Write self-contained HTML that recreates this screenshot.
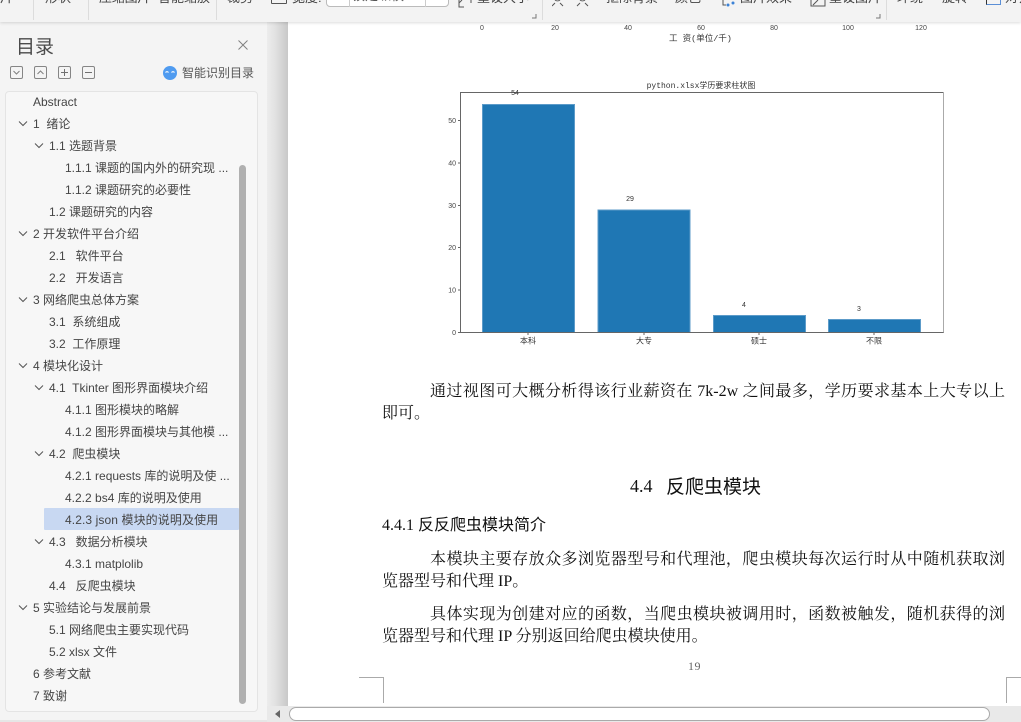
<!DOCTYPE html>
<html lang="zh">
<head>
<meta charset="utf-8">
<title>目录</title>
<style>
*{box-sizing:border-box}
html,body{margin:0;padding:0}
body{width:1021px;height:722px;position:relative;overflow:hidden;background:#fff;font-family:"Liberation Sans","Noto Sans CJK SC",sans-serif}
.a{position:absolute;white-space:nowrap}
.tb{font-size:13px;line-height:16px;top:-10px;color:#444}
.sep{position:absolute;top:0;width:1px;height:20px;background:#dcdcdc}
.toc{position:absolute;font-size:12px;line-height:22px;height:22px;color:#454545;white-space:pre;margin-top:1px}
.ic{position:absolute;top:66px;width:13px;height:13px;border:1px solid #858585;border-radius:2px}
.line{position:absolute;left:382px;width:623px;height:22px;font-family:"Liberation Serif","Noto Serif CJK SC",serif;font-size:16px;line-height:22px;color:#111;white-space:nowrap}
.j{text-align-last:justify;white-space:normal}
</style>
</head>
<body>

<!-- sidebar -->
<div class="a" style="left:0;top:22px;width:267px;height:700px;background:#f4f4f4"></div>
<!-- gutter -->
<div class="a" style="left:267px;top:22px;width:21px;height:684px;background:linear-gradient(90deg,#ececec 0,#e3e3e3 35%,#c8c8c8 100%)"></div>

<!-- toolbar -->
<div class="a" style="left:0;top:0;width:1021px;height:22px;background:#f3f3f3;box-shadow:0 1px 3px rgba(0,0,0,.14)"></div>
<div class="a tb" style="left:0">片</div>
<div class="sep" style="left:33px"></div>
<div class="a tb" style="left:45px">形状</div>
<div class="sep" style="left:88px"></div>
<div class="a tb" style="left:99px;letter-spacing:-.2px">压缩图片</div>
<div class="a tb" style="left:158px">智能缩放</div>
<div class="sep" style="left:216px"></div>
<div class="a tb" style="left:227px">裁剪</div>
<div class="a" style="left:271px;top:-6px;width:16px;height:10px;border:1px solid #555;border-radius:1px"></div>
<div class="a tb" style="left:292px">宽度:</div>
<div class="a" style="left:326px;top:-8px;width:123px;height:15px;background:#fff;border:1px solid #bbb;border-radius:4px"></div>
<div class="a" style="left:349px;top:0;width:1px;height:7px;background:#ccc"></div>
<div class="a" style="left:425px;top:0;width:1px;height:7px;background:#ccc"></div>
<div class="a tb" style="left:352px;top:-12px;color:#555">锁定纵横</div>
<div class="a tb" style="left:436px;top:-12px;color:#555">+</div>
<svg class="a" style="left:458px;top:0" width="14" height="9"><path d="M1 0V7H6M13 0V3M4 0L1 3" fill="none" stroke="#555"/></svg>
<div class="a tb" style="left:477px">重设大小</div>
<svg class="a" style="left:531px;top:13px" width="6" height="6"><path d="M5 1V5H1" fill="none" stroke="#777"/></svg>
<div class="sep" style="left:542px"></div>
<svg class="a" style="left:552px;top:0" width="40" height="7"><path d="M3 0A4 4 0 0 0 8 0M0 6L3 3M11 6L8 3M28 0A4 4 0 0 0 33 0M25 6L28 3M36 6L33 3" fill="none" stroke="#555"/></svg>
<div class="a tb" style="left:606px">抠除背景</div>
<div class="a tb" style="left:675px">颜色</div>
<svg class="a" style="left:720px;top:0" width="16" height="9"><circle cx="8" cy="5" r="1.5" fill="#3b82d6"/><circle cx="13" cy="3" r="1.5" fill="#3b82d6"/><path d="M3 0V5H6" fill="none" stroke="#555"/></svg>
<div class="a tb" style="left:740px">图片效果</div>
<svg class="a" style="left:810px;top:0" width="16" height="7"><path d="M1 0V6H15V0M3 5L8 0" fill="none" stroke="#555"/></svg>
<div class="a tb" style="left:829px">重设图片</div>
<svg class="a" style="left:875px;top:13px" width="6" height="6"><path d="M5 1V5H1" fill="none" stroke="#777"/></svg>
<div class="sep" style="left:886px"></div>
<div class="a tb" style="left:897px">环绕</div>
<div class="a tb" style="left:942px">旋转</div>
<div class="a" style="left:986px;top:-6px;width:15px;height:11px;border:1px solid #5b8fd6;border-left:1px solid #333"></div>
<div class="a tb" style="left:1005px">对齐</div>

<!-- sidebar header -->
<div class="a" style="left:16px;top:35px;font-size:19px;line-height:26px;color:#4a4a4a">目录</div>
<svg class="a" style="left:237px;top:39px" width="12" height="12"><path d="M1.5 1.5L10.5 10.5M10.5 1.5L1.5 10.5" stroke="#808080" stroke-width="1"/></svg>
<div class="ic" style="left:10px"><svg style="position:absolute;left:0;top:0" width="11" height="11"><path d="M2.5 4L5.5 7L8.5 4" fill="none" stroke="#808080"/></svg></div>
<div class="ic" style="left:34px"><svg style="position:absolute;left:0;top:0" width="11" height="11"><path d="M2.5 7L5.5 4L8.5 7" fill="none" stroke="#808080"/></svg></div>
<div class="ic" style="left:58px"><svg style="position:absolute;left:0;top:0" width="11" height="11"><path d="M2 5.5H9M5.5 2V9" fill="none" stroke="#707070"/></svg></div>
<div class="ic" style="left:82px"><svg style="position:absolute;left:0;top:0" width="11" height="11"><path d="M2 5.5H9" fill="none" stroke="#707070"/></svg></div>
<svg class="a" style="left:163px;top:66px" width="14" height="14"><circle cx="7" cy="7" r="7" fill="#4f9bf0"/><path d="M2.5 6.5Q4 4.8 5.5 6.5M8.5 6.5Q10 4.8 11.5 6.5" fill="none" stroke="#fff" stroke-width="1.1"/></svg>
<div class="a" style="left:182px;top:64px;font-size:12px;line-height:18px;color:#555">智能识别目录</div>

<!-- TOC panel -->
<div class="a" style="left:5px;top:91px;width:253px;height:621px;background:#f7f7f7;border:1px solid #e4e4e4;border-radius:4px"></div>
<div class="a" style="left:44px;top:508px;width:195px;height:22px;background:#c8d8f2;border-radius:1px"></div>
<div class="a" style="left:239px;top:165px;width:7px;height:539px;background:#b0b0b0;border-radius:3.5px"></div>

<div class="toc" style="left:33px;top:90px">Abstract</div>
<div class="toc" style="left:33px;top:112px">1  绪论</div>
<div class="toc" style="left:49px;top:134px">1.1 选题背景</div>
<div class="toc" style="left:65px;top:156px">1.1.1 课题的国内外的研究现 ...</div>
<div class="toc" style="left:65px;top:178px">1.1.2 课题研究的必要性</div>
<div class="toc" style="left:49px;top:200px">1.2 课题研究的内容</div>
<div class="toc" style="left:33px;top:222px">2 开发软件平台介绍</div>
<div class="toc" style="left:49px;top:244px">2.1   软件平台</div>
<div class="toc" style="left:49px;top:266px">2.2   开发语言</div>
<div class="toc" style="left:33px;top:288px">3 网络爬虫总体方案</div>
<div class="toc" style="left:49px;top:310px">3.1  系统组成</div>
<div class="toc" style="left:49px;top:332px">3.2  工作原理</div>
<div class="toc" style="left:33px;top:354px">4 模块化设计</div>
<div class="toc" style="left:49px;top:376px">4.1  Tkinter 图形界面模块介绍</div>
<div class="toc" style="left:65px;top:398px">4.1.1 图形模块的略解</div>
<div class="toc" style="left:65px;top:420px">4.1.2 图形界面模块与其他模 ...</div>
<div class="toc" style="left:49px;top:442px">4.2  爬虫模块</div>
<div class="toc" style="left:65px;top:464px">4.2.1 requests 库的说明及使 ...</div>
<div class="toc" style="left:65px;top:486px">4.2.2 bs4 库的说明及使用</div>
<div class="toc" style="left:65px;top:508px;letter-spacing:.1px">4.2.3 json 模块的说明及使用</div>
<div class="toc" style="left:49px;top:530px">4.3   数据分析模块</div>
<div class="toc" style="left:65px;top:552px">4.3.1 matplolib</div>
<div class="toc" style="left:49px;top:574px">4.4   反爬虫模块</div>
<div class="toc" style="left:33px;top:596px">5 实验结论与发展前景</div>
<div class="toc" style="left:49px;top:618px">5.1 网络爬虫主要实现代码</div>
<div class="toc" style="left:49px;top:640px">5.2 xlsx 文件</div>
<div class="toc" style="left:33px;top:662px">6 参考文献</div>
<div class="toc" style="left:33px;top:684px">7 致谢</div>

<svg class="a" style="left:0;top:0" width="60" height="640"><g fill="none" stroke="#555" stroke-width="1">
<path d="M19 121.5L23 125.500L27 121.5"/>
<path d="M35 143.5L39 147.500L43 143.5"/>
<path d="M19 231.5L23 235.500L27 231.5"/>
<path d="M19 297.5L23 301.500L27 297.5"/>
<path d="M19 363.5L23 367.500L27 363.5"/>
<path d="M35 385.5L39 389.500L43 385.5"/>
<path d="M35 451.5L39 455.500L43 451.5"/>
<path d="M35 539.5L39 543.500L43 539.5"/>
<path d="M19 605.5L23 609.500L27 605.5"/>
</g></svg>

<!-- page: previous chart ticks -->
<svg class="a" style="left:288px;top:22px" width="733" height="340" font-family="'Liberation Sans','Noto Sans CJK SC',sans-serif" fill="#444">
<g font-size="7" text-anchor="middle">
<text x="194" y="8">0</text><text x="267" y="8">20</text><text x="340" y="8">40</text><text x="413" y="8">60</text><text x="486" y="8">80</text><text x="560" y="8">100</text><text x="633" y="8">120</text>
</g>
<text x="381" y="19" font-size="8.500" fill="#333" font-family="'Liberation Mono','Noto Sans CJK SC',monospace" xml:space="preserve">工 资(单位/千)</text>
<text x="413" y="66" font-size="8" text-anchor="middle" fill="#333" font-family="'Liberation Mono','Noto Sans CJK SC',monospace">python.xlsx学历要求柱状图</text>
<!-- axes -->
<rect x="172.5" y="70.5" width="483" height="240" fill="none" stroke="#666"/>
<path d="M655.5 70V311" stroke="#aaa"/>
<!-- bars -->
<g fill="#1f77b4" stroke="#5c9bc9" stroke-width="1">
<rect x="194.5" y="82.5" width="92" height="228"/>
<rect x="310" y="188" width="92" height="122.5"/>
<rect x="425.5" y="293.5" width="92" height="17"/>
<rect x="540.5" y="297.5" width="92" height="13"/>
</g>
<path d="M172.5 310.5H655.5" stroke="#666"/>
<!-- y ticks -->
<g stroke="#666"><path d="M170 98.5H172M170 141H172M170 183.5H172M170 225.5H172M170 268H172M170 310.5H172M240 311V313M356 311V313M471 311V313M586 311V313"/></g>
<g font-size="7" text-anchor="end">
<text x="168" y="101">50</text><text x="168" y="143.500">40</text><text x="168" y="186">30</text><text x="168" y="228">20</text><text x="168" y="270.500">10</text><text x="168" y="313">0</text>
</g>
<g font-size="7" text-anchor="middle" fill="#333">
<text x="227" y="73">54</text><text x="342" y="179">29</text><text x="456" y="285">4</text><text x="571" y="289">3</text>
</g>
<g font-size="8" text-anchor="middle" fill="#333">
<text x="240" y="321.500">本科</text><text x="356" y="321.500">大专</text><text x="471" y="321.500">硕士</text><text x="586" y="321.500">不限</text>
</g>
</svg>

<!-- body text -->
<div class="line j" style="left:430px;width:575px;top:381px">通过视图可大概分析得该行业薪资在 7k-2w 之间最多，学历要求基本上大专以上</div>
<div class="line" style="top:403px">即可。</div>
<div class="a" style="left:630px;top:474px;font-family:'Liberation Serif',serif;font-size:18px;line-height:24px;color:#111">4.4</div>
<div class="a" style="left:666px;top:474px;font-family:'Noto Sans CJK SC',sans-serif;font-size:19px;line-height:24px;color:#111">反爬虫模块</div>
<div class="line" style="top:515px;font-size:16px;font-family:'Liberation Serif','Noto Sans CJK SC',serif">4.4.1 反反爬虫模块简介</div>
<div class="line j" style="left:430px;width:575px;top:549px">本模块主要存放众多浏览器型号和代理池，爬虫模块每次运行时从中随机获取浏</div>
<div class="line" style="top:571px">览器型号和代理 IP。</div>
<div class="line j" style="left:430px;width:575px;top:604px">具体实现为创建对应的函数，当爬虫模块被调用时，函数被触发，随机获得的浏</div>
<div class="line" style="top:626px">览器型号和代理 IP 分别返回给爬虫模块使用。</div>
<div class="a" style="left:688px;top:659px;font-family:'Liberation Serif',serif;font-size:12px;line-height:14px;color:#666;letter-spacing:.5px">19</div>

<!-- crop marks -->
<div class="a" style="left:359px;top:677px;width:24px;height:1px;background:#aaa"></div>
<div class="a" style="left:383px;top:677px;width:1px;height:26px;background:#aaa"></div>
<div class="a" style="left:1006px;top:677px;width:15px;height:1px;background:#aaa"></div>
<div class="a" style="left:1006px;top:677px;width:1px;height:26px;background:#aaa"></div>

<!-- bottom scrollbar -->
<div class="a" style="left:267px;top:706px;width:754px;height:16px;background:#e9e9e9"></div>
<div class="a" style="left:0;top:720px;width:267px;height:2px;background:#e6e6e6"></div>
<svg class="a" style="left:275px;top:710px" width="6" height="8"><path d="M5 0V8L0 4Z" fill="#666"/></svg>
<div class="a" style="left:289px;top:707px;width:701px;height:14px;background:#fff;border:1px solid #aaa;border-radius:7px"></div>

</body>
</html>
